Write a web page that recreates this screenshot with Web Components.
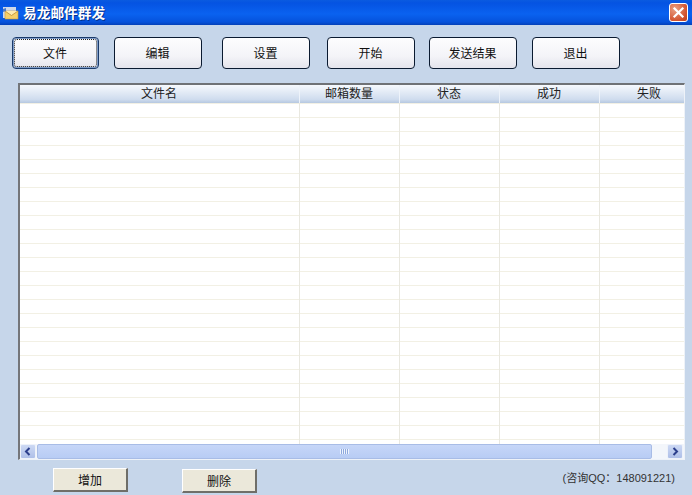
<!DOCTYPE html>
<html>
<head>
<meta charset="utf-8">
<style>
html, body { margin: 0; padding: 0; }
body { width: 692px; height: 495px; overflow: hidden; font: 12px "Noto Sans CJK SC", "Liberation Sans", sans-serif; color: #111; }
</style>
</head>
<body>
<mail-window>
    <title-bar slot="title">易龙邮件群发</title-bar>
    <tool-button slot="tools" focused>文件</tool-button>
    <tool-button slot="tools" style="margin-left:15px;width:88px">编辑</tool-button>
    <tool-button slot="tools" style="margin-left:20px;width:88px">设置</tool-button>
    <tool-button slot="tools" style="margin-left:17px;width:88px">开始</tool-button>
    <tool-button slot="tools" style="margin-left:14px;width:88px">发送结果</tool-button>
    <tool-button slot="tools" style="margin-left:15px;width:88px">退出</tool-button>
    <file-table slot="table"></file-table>
    <plain-button slot="footer">增加</plain-button>
    <plain-button slot="footer" style="margin-left:54px;margin-top:1px">删除</plain-button>
    <span slot="note">(咨询QQ：148091221)</span>
</mail-window>
<script>
class MailWindow extends HTMLElement {
    constructor() {
        super();
        this.attachShadow({ mode: 'open' });
        this.shadowRoot.innerHTML = `
            <style>
                :host { display: flex; flex-direction: column; width: 692px; height: 495px; background: #c6d6ea; }
                .tools { display: flex; padding: 12px 0 0 12px; height: 32px; }
                .table { padding: 14px 7px 0 18px; }
                .footer { display: flex; align-items: flex-start; padding: 8px 17px 0 53px; }
                .note { margin-left: auto; padding-top: 1px; color: #333; font: 11px/18px "Liberation Sans", "Noto Sans CJK SC", sans-serif; }
            </style>
            <slot name="title"></slot>
            <div class="tools"><slot name="tools"></slot></div>
            <div class="table"><slot name="table"></slot></div>
            <div class="footer"><slot name="footer"></slot><div class="note"><slot name="note"></slot></div></div>
        `;
    }
}

class TitleBar extends HTMLElement {
    constructor() {
        super();
        this.attachShadow({ mode: 'open' });
        this.shadowRoot.innerHTML = `
            <style>
                :host {
                    display: flex; align-items: center; height: 25px; padding: 0 3px;
                    background: linear-gradient(#0a5be0 0, #0553e2 3px, #0a62f0 14px, #0552dc 22px, #0340b8 25px);
                    color: #fff; font-weight: bold; font-size: 13.7px; text-shadow: 1px 1px 0 #02308c;
                }
                svg { display: block; }
                .label { margin-left: 4px; padding-bottom: 2px; }
                .close {
                    margin-left: auto; margin-right: 1px; width: 19px; height: 19px; box-sizing: border-box;
                    border: 1px solid #fff; border-radius: 3px; background: radial-gradient(circle at 30% 30%, #e9a083, #d2522d 70%, #b8401c);
                }
            </style>
            <svg width="16" height="16" viewBox="0 0 16 16">
                <rect x="0" y="2" width="13" height="11" fill="#cfd8e8"/>
                <path d="M2 6h13v8H2z" fill="#f4cf6a" stroke="#c99a3a" stroke-width=".6"/>
                <path d="M2 6l6.5 4.5L15 6" fill="#fdebb0" stroke="#b98a30" stroke-width=".8"/>
                <path d="M0 4l3-1v3l-3 1z" fill="#4a78c8"/>
            </svg>
            <span class="label"><slot></slot></span>
            <div class="close">
                <svg width="17" height="17" viewBox="0 0 17 17"><path d="M4.5 4.5l8 8M12.5 4.5l-8 8" stroke="#fff" stroke-width="2.2" stroke-linecap="square"/></svg>
            </div>
        `;
    }
}

class ToolButton extends HTMLElement {
    constructor() {
        super();
        this.attachShadow({ mode: 'open' });
        this.shadowRoot.innerHTML = `
            <style>
                :host {
                    display: flex; align-items: center; justify-content: center;
                    width: 87px; height: 32px; box-sizing: border-box; position: relative;
                    padding: 0 1px 2px 0;
                    border: 1px solid #0a1a30; border-radius: 4px;
                    background: linear-gradient(#fdfdfe 0, #f4f4f8 60%, #e4e4ec 100%);
                    font-size: 12px; color: #111;
                }
                :host([focused]) { border-color: #1a3a6a; box-shadow: inset 0 0 0 1px #7f9cc8; }
                :host([focused])::after {
                    content: ""; position: absolute; inset: 1px; border: 1px dotted #222; border-radius: 3px;
                }
            </style>
            <slot></slot>
        `;
    }
}

class PlainButton extends HTMLElement {
    constructor() {
        super();
        this.attachShadow({ mode: 'open' });
        this.shadowRoot.innerHTML = `
            <style>
                :host {
                    display: flex; align-items: center; justify-content: center;
                    width: 75px; height: 24px; box-sizing: border-box;
                    background: #ebe8da;
                    border-top: 1px solid #fff; border-left: 1px solid #fff;
                    border-right: 2px solid #6f6e68; border-bottom: 2px solid #6f6e68;
                    font-size: 12px; color: #111;
                }
            </style>
            <slot></slot>
        `;
    }
}

class FileTable extends HTMLElement {
    constructor() {
        super();
        this.attachShadow({ mode: 'open' });
        const columns = [['文件名', 280], ['邮箱数量', 100], ['状态', 100], ['成功', 100], ['失败', 100]];
        this.shadowRoot.innerHTML = `
            <style>
                :host {
                    display: block; width: 667px; height: 377px; box-sizing: border-box;
                    border-top: 2px solid #6f7276; border-left: 2px solid #74767a;
                    border-right: 1px solid #eef2f8; border-bottom: 1px solid #eef2f8;
                    background: #fff; overflow: hidden;
                }
                .head { display: flex; height: 18px; background: linear-gradient(#f6f9fd, #cfdcee 80%, #b6c8e0); font-size: 12px; color: #222; }
                .head div { flex: none; box-sizing: border-box; padding-right: 1px; text-align: center; line-height: 15px; border-right: 1px solid #eef3fa; }
                .body {
                    height: 341px; display: flex;
                    background: linear-gradient(#fff 0, #fff 13px, #f2f0e4 13px, #f2f0e4 14px) 0 1px / 100% 14px;
                }
                .body div { flex: none; box-sizing: border-box; border-right: 1px solid #e9e8e0; }
            </style>
            <div class="head">${columns.map(c => `<div style="width:${c[1]}px">${c[0]}</div>`).join('')}</div>
            <div class="body">${columns.map(c => `<div style="width:${c[1]}px"></div>`).join('')}</div>
            <h-scrollbar></h-scrollbar>
        `;
    }
}

class HScrollbar extends HTMLElement {
    constructor() {
        super();
        this.attachShadow({ mode: 'open' });
        this.shadowRoot.innerHTML = `
            <style>
                :host { display: flex; height: 15px; padding-right: 1px; background: #f3f6fb; align-items: stretch; }
                .arrow { width: 16px; box-sizing: border-box; border: 1px solid #eef2fa; border-radius: 2px; background: linear-gradient(#cdd9f4, #aebfe8); }
                .arrow svg { display: block; }
                .thumb {
                    flex: 0 0 615px; margin-left: 1px; box-sizing: border-box; border: 1px solid #a8bce6; border-radius: 2px;
                    background: linear-gradient(#c6d6f8, #b8ccf4);
                    display: flex; align-items: center; justify-content: center;
                }
                .grip { width: 9px; height: 5px; background: repeating-linear-gradient(90deg, #eef3fd 0, #eef3fd 1px, #8ea8dc 1px, #8ea8dc 2px); }
                .end { margin-left: auto; }
            </style>
            <div class="arrow"><svg width="14" height="13" viewBox="0 0 14 13"><path d="M8.5 3L5 6.5 8.5 10" fill="none" stroke="#2c3f8c" stroke-width="2"/></svg></div>
            <div class="thumb"><div class="grip"></div></div>
            <div class="arrow end"><svg width="14" height="13" viewBox="0 0 14 13"><path d="M5.5 3L9 6.5 5.5 10" fill="none" stroke="#2c3f8c" stroke-width="2"/></svg></div>
        `;
    }
}

customElements.define('mail-window', MailWindow);
customElements.define('title-bar', TitleBar);
customElements.define('tool-button', ToolButton);
customElements.define('plain-button', PlainButton);
customElements.define('file-table', FileTable);
customElements.define('h-scrollbar', HScrollbar);
</script>
</body>
</html>
